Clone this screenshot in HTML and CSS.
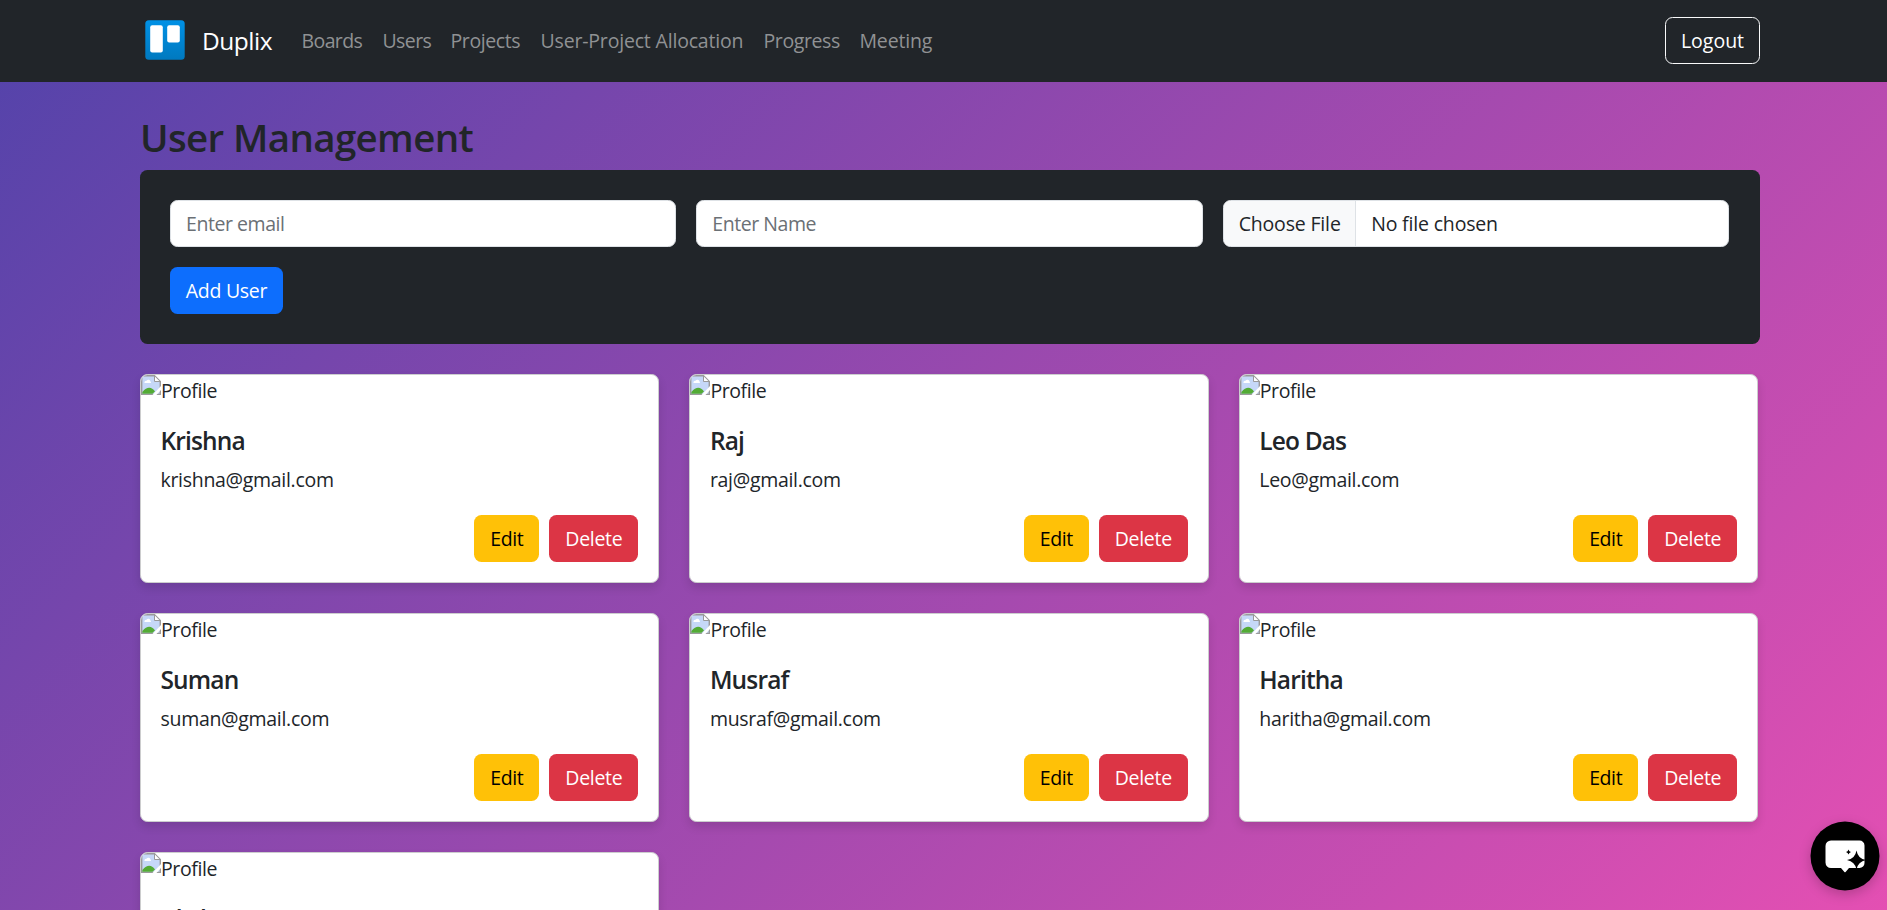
FILE: index.html
```html
<!DOCTYPE html>
<html lang="en">
<head>
<meta charset="utf-8">
<title>Duplix</title>
<link rel="stylesheet" href="styles.css">
</head>
<body>
<nav class="navbar">
  <svg class="logo" viewBox="0 0 40 40"><defs><linearGradient id="lg" x1="0" y1="0" x2="0" y2="1"><stop offset="0" stop-color="#0091e6"/><stop offset="1" stop-color="#0079bf"/></linearGradient></defs><rect x=".3" y=".2" width="39.4" height="39.6" rx="3.5" fill="url(#lg)"/><rect x="5.2" y="5.2" width="12.6" height="27.4" rx="2" fill="#fff"/><rect x="22.2" y="5.2" width="12.6" height="17.4" rx="2" fill="#fff"/></svg>
  <a class="brand"><span>Duplix</span></a>
  <div class="links"><a class="tight">Boards</a><a class="tight">Users</a><a>Projects</a><a class="wide">User-Project Allocation</a><a>Progress</a><a class="wide">Meeting</a></div>
  <button class="btn outline">Logout</button>
</nav>
<main class="container">
  <h2 class="title"><span>User Management</span></h2>
  <form class="panel">
    <input class="control" placeholder="Enter email">
    <input class="control" placeholder="Enter Name">
    <div class="control file"><span class="choose">Choose File</span><span class="none">No file chosen</span></div>
    <button type="button" class="btn primary">Add User</button>
  </form>
  <section class="cards" id="cards"></section>
</main>
<svg class="chat" viewBox="0 0 70 70"><circle cx="35" cy="35" r="34.5"/><path fill="#fff" d="M21 19.500h28.500a5 5 0 0 1 5 5v17.500a5 5 0 0 1-5 5H39l-3.400 4q-.6.6-1.200 0L31 47H21a5.500 5.500 0 0 1-5.500-5.500V25a5.500 5.500 0 0 1 5.500-5.500z"/><path d="M46.500 29.500q1.500 8.500 9.500 9.500q-8 1.500-9.500 9.500q-1.500-8-9.500-9.500q8-1 9.500-9.500zM38.500 28.500q.5 2 2.500 2.500q-2 .5-2.500 2.500q-.5-2-2.500-2.500q2-.5 2.500-2.500z"/></svg>
<script src="app.js"></script>
</body>
</html>
```
FILE: app.js
```js
const users = [
  ["Krishna", "krishna@gmail.com"],
  ["Raj", "raj@gmail.com"],
  ["Leo Das", "Leo@gmail.com"],
  ["Suman", "suman@gmail.com"],
  ["Musraf", "musraf@gmail.com"],
  ["Haritha", "haritha@gmail.com"],
  ["Akshay"],
];
const icon = '<svg class="broken" viewBox="0 0 20 20"><path d="M.7.7h12.800L19.300 6.500v13H.7z" fill="#c6d8f8" stroke="#9a9a9a" stroke-width="1.400"/><path d="M13.500.7v5.800h5.800z" fill="#fff" stroke="#9a9a9a"/><path d="M3.500 8a1.800 1.800 0 0 1 2-2.200a2.200 2.200 0 0 1 4 .6a1.300 1.300 0 0 1 .3 1.600z" fill="#fff"/><path d="M1.400 18.800v-1.800q7-8 12.600-.5l-2.500 2.300z" fill="#53ab35"/><path d="M11 20.500L20.500 10.500v4L15 20.500z" fill="#fff"/></svg>';
const details = (email) => `
      <p class="email"><span>${email}</span></p>
      <div class="actions"><button class="btn warning">Edit</button><button class="btn danger">Delete</button></div>`;
document.getElementById("cards").innerHTML = users.map(([name, email]) => `
  <article class="card">
    <div class="image">${icon}<span>Profile</span></div>
    <div class="body">
      <h5 class="name"><span>${name}</span></h5>${email ? details(email) : ""}
    </div>
  </article>`).join("");
```
FILE: styles.css
```css
* { box-sizing: border-box; }
html, body { height: 100%; }
body {
  margin: 0;
  overflow: hidden;
  font: 19.5px/30px "Open Sans", "Noto Sans", sans-serif;
  letter-spacing: -0.4px;
  color: #212529;
  background: linear-gradient(135deg, #5243aa, #ed50b3) no-repeat 0 0 / 100% 1091px;
}
.navbar {
  height: 82px;
  padding: 0 127px 0 145px;
  display: flex;
  align-items: center;
  background: #212529;
}
.logo { width: 40px; height: 40px; flex: none; margin-bottom: 2px; }
.brand { margin-left: 17px; width: 90px; font-size: 24.500px; letter-spacing: -0.5px; color: #fff; }
.links { display: grid; grid-template-columns: 81px 68px 90px 223px 96px auto; justify-content: start; flex: 1; padding-left: 9.500px; }
.links a { color: #909294; white-space: nowrap; }
.links .tight { letter-spacing: -0.6px; }
.links .wide { letter-spacing: -0.18px; }
.btn {
  height: 47px;
  padding: 0;
  text-align: center;
  border: 1px solid transparent;
  border-radius: 7.500px;
  font: inherit;
  letter-spacing: inherit;
  white-space: nowrap;
}
.outline { width: 95px; margin-bottom: 1px; background: none; color: #fff; border-color: #f8f9fa; letter-spacing: 0; }
.primary { width: 113px; background: #0d6efd; color: #fff; letter-spacing: -0.3px; }
.warning { width: 65px; background: #ffc107; color: #000; }
.danger { width: 89px; background: #dc3545; color: #fff; letter-spacing: -0.3px; }
.container { padding: 31px 127px 0 140px; }
.title { margin: 0 0 9px; font-size: 38.5px; line-height: 48px; font-weight: 600; letter-spacing: -0.65px; }
.panel {
  height: 174px;
  padding: 30px 31px 30px 30px;
  display: grid;
  grid-template-columns: repeat(3, 1fr);
  gap: 20px;
  justify-items: start;
  background: #212529;
  border-radius: 7.500px;
}
.control {
  width: 100%;
  height: 47px;
  padding: 0 15px;
  border: 1px solid #dee2e6;
  border-radius: 7.500px;
  background: #fff;
  font: inherit;
  letter-spacing: -0.45px;
}
.control::placeholder { color: #6b7075; }
.file { display: flex; padding: 0; line-height: 45px; overflow: hidden; color: #212529; letter-spacing: -0.17px; }
.choose { width: 132px; padding-left: 15px; background: #f8f9fa; border-right: 1px solid #dee2e6; }
.none { padding-left: 15.500px; }
.cards {
  margin-top: 30px;
  display: grid;
  grid-template-columns: repeat(3, 519.4px);
  column-gap: 30px;
  row-gap: 30px;
}
.card {
  height: 209px;
  background: #fff;
  border: 1px solid #cccdce;
  border-radius: 7.500px;
  box-shadow: 0 5px 10px rgba(0, 0, 0, .12);
  overflow: hidden;
}
.image { height: 30px; display: flex; }
.image span { padding-top: 1px; }
.broken { width: 20px; height: 20px; flex: none; }
.body { padding: 20px 20px 0 19.5px; }
.name { margin: 0 0 10px; padding-top: 1px; font-size: 24.500px; line-height: 29px; font-weight: 600; letter-spacing: -0.85px; }
.email { margin: 0 0 20px; letter-spacing: -0.3px; }
.actions { display: flex; justify-content: flex-end; gap: 10px; }
.chat { position: fixed; left: 1810px; top: 821px; width: 70px; height: 70px; overflow: visible; filter: drop-shadow(0 4px 6px rgba(0, 0, 0, .2)); }
```
